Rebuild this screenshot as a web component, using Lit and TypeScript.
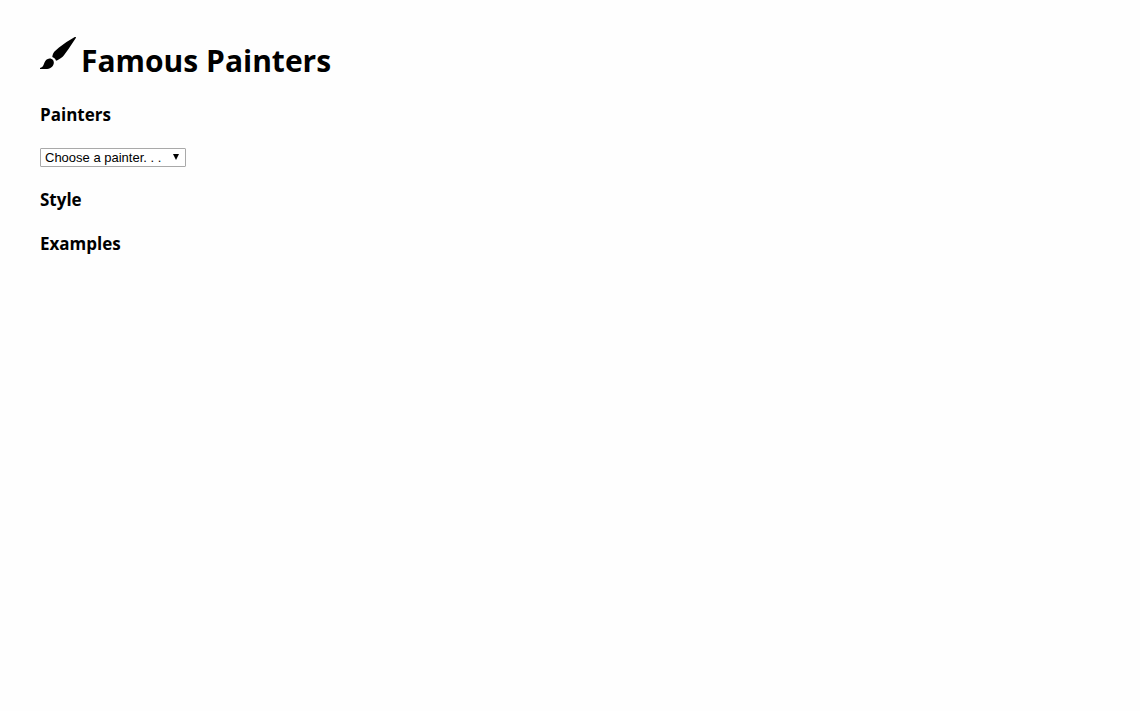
import { LitElement, html, css } from "lit";
import { customElement, state } from "lit/decorators.js";

const PAINTERS = ["Claude Monet", "Vincent van Gogh", "Pablo Picasso"];

@customElement("app-root")
export class AppRoot extends LitElement {
  static styles = css`
    :host {
      display: block;
      min-height: 100vh;
      box-sizing: border-box;
      padding: 36px 40px;
      background: #fefefe;
      color: #000;
      font-family: "Segoe UI", "Open Sans", "Noto Sans", sans-serif;
    }
    .title {
      display: flex;
      align-items: flex-start;
      gap: 4px;
      margin: 0 0 17px;
      font-size: 30px;
      line-height: 50px;
      font-weight: 700;
    }
    .brush {
      width: 37px;
      height: 34px;
      flex: none;
    }
    .heading {
      margin: 0 0 20px;
      font-size: 17px;
      line-height: 24px;
      font-weight: 700;
    }
    .picker {
      position: relative;
      display: flex;
      width: fit-content;
      margin: 21px 0;
    }
    .select {
      appearance: none;
      width: 146px;
      height: 19px;
      margin: 0;
      padding: 0 20px 0 4px;
      border: 1px solid #a9a9a9;
      border-radius: 1px;
      background: #fff;
      color: #000;
      font: 13px "Liberation Sans", Arial, sans-serif;
    }
    .arrow {
      position: absolute;
      right: 7px;
      top: 6px;
      width: 6px;
      height: 6px;
      pointer-events: none;
    }
  `;

  @state() private painter = "";

  render() {
    return html`
      <h1 class="title">
        <svg class="brush" viewBox="0 0 37 34" aria-hidden="true">
          <path d="M34.800 1.100C35.700 .7 36.300 1.200 35.800 2L28.500 13L24.500 18.500C23.500 20 22.500 21 21 22C19.500 23.100 18 24.200 16 24.800C15.500 22.900 14.400 21.600 12.300 20.900C12.500 18.800 13.200 17 14.500 15.500L19 11.500L26.500 6Z" />
          <path d="M9.500 22.500C12.300 22.400 14.200 24.600 13.800 27.200C13.200 31 10 32.900 5.500 33H0V32.100C2.800 31.400 3.500 29.500 4.400 26.800C5.200 24.400 7 22.700 9.500 22.500Z" />
        </svg>
        <span>Famous Painters</span>
      </h1>
      <h3 class="heading" id="painters">Painters</h3>
      <div class="picker">
        <select
          class="select"
          aria-labelledby="painters"
          @change=${(e: Event) => (this.painter = (e.target as HTMLSelectElement).value)}
        >
          <option value="" ?selected=${!this.painter}>Choose a painter. . .</option>
          ${PAINTERS.map((name) => html`<option value=${name}>${name}</option>`)}
        </select>
        <svg class="arrow" viewBox="0 0 6 6" aria-hidden="true"><path d="M0 0H6L3 6Z" /></svg>
      </div>
      <h3 class="heading">Style</h3>
      <h3 class="heading">Examples</h3>
    `;
  }
}
